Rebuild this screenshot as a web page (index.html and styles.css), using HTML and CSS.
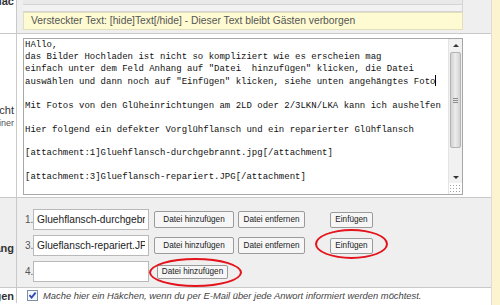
FILE: index.html
```html
<!DOCTYPE html>
<html>
  <head>
    <title>Beitrag schreiben</title>
    <link rel="stylesheet" href="styles.css">
  </head>
  <body>
    <div class="page">
      <div class="form">
        <div class="row row-tools">
          <div class="label label-top"><span class="label-title">Formatierung am Mac</span></div>
          <div class="cell">
            <div class="toolbar">
              <div class="tool-line"></div>
              <div class="tool-line tool-mid"></div>
              <div class="hint">Versteckter Text: [hide]Text[/hide] - Dieser Text bleibt Gästen verborgen</div>
            </div>
          </div>
        </div>

        <div class="row row-message">
          <div class="label">
            <div class="label-block">
              <div class="label-title">Nachricht</div>
              <div class="label-desc">Text deiner</div>
            </div>
          </div>
          <div class="cell">
            <div class="editor">
              <div class="editor-text">HAllo,
das Bilder Hochladen ist nicht so kompliziert wie es erscheien mag
einfach unter dem Feld Anhang auf "Datei  hinzufügen" klicken, die Datei
auswählen und dann noch auf "Einfügen" klicken, siehe unten angehängtes Foto<span class="caret"></span>

Mit Fotos von den Glüheinrichtungen am 2LD oder 2/3LKN/LKA kann ich aushelfen

Hier folgend ein defekter Vorglühflansch und ein reparierter Glühflansch

[attachment:1]Gluehflansch-durchgebrannt.jpg[/attachment]

[attachment:3]Glueflansch-repariert.JPG[/attachment]

Auf weitere Fragen freue ich mich</div>
              <div class="scrollbar">
                <div class="scroll-btn"><span class="arrow-up"></span></div>
                <div class="scroll-track">
                  <div class="scroll-thumb"><span class="grip"></span></div>
                </div>
                <div class="scroll-btn"><span class="arrow-down"></span></div>
                <div class="resize-grip"></div>
              </div>
            </div>
          </div>
        </div>

        <div class="row row-attach">
          <div class="label"><span class="label-title bold">Anhang</span></div>
          <div class="cell">
            <div class="attach-row">
              <span class="num">1.</span>
              <input class="file-name" type="text" value="Gluehflansch-durchgebrannt.jpg" readonly>
              <button class="btn btn-add">Datei hinzufügen</button>
              <button class="btn btn-remove">Datei entfernen</button>
              <button class="btn btn-insert">Einfügen</button>
            </div>
            <div class="attach-row">
              <span class="num">3.</span>
              <input class="file-name" type="text" value="Glueflansch-repariert.JPG" readonly>
              <button class="btn btn-add">Datei hinzufügen</button>
              <button class="btn btn-remove">Datei entfernen</button>
              <span class="circled circled-insert"><button class="btn btn-insert">Einfügen</button></span>
            </div>
            <div class="attach-row">
              <span class="num">4.</span>
              <input class="file-name" type="text" value="" readonly>
              <span class="circled circled-upload"><button class="btn btn-upload">Datei hinzufügen</button></span>
            </div>
          </div>
        </div>

        <div class="row row-notify">
          <div class="label"><span class="label-title bold">Benachrichtigen</span></div>
          <div class="cell">
            <label class="check">
              <span class="check-box">
                <svg width="9" height="9" viewBox="0 0 9 9"><polyline points="1.5,4.2 3.6,6.6 7.6,1.6" fill="none" stroke="#2b47b8" stroke-width="1.8"/></svg>
              </span>
              <span class="check-text">Mache hier ein Häkchen, wenn du per E-Mail über jede Anwort informiert werden möchtest.</span>
            </label>
          </div>
        </div>
      </div>
      <div class="strip"></div>
    </div>
  </body>
</html>
```

FILE: styles.css
```css
body {
  margin: 0;
  background-color: #ffffff;
  color: #333333;
  font-family: "Liberation Sans", Arial, sans-serif;
}

.page {
  display: flex;
  height: 305px;
  overflow: hidden;
}

.form {
  width: 491px;
  border-right: 1px solid #dcdcdc;
}

.strip {
  flex: 1;
  background-color: #fcf3cf;
}

.row {
  display: flex;
  border-bottom: 1px solid #c9c9c9;
}

.label {
  width: 14px;
  padding-right: 2px;
  border-right: 1px solid #c9c9c9;
  display: flex;
  justify-content: flex-end;
  align-items: center;
  overflow: hidden;
  white-space: nowrap;
  font-size: 11px;
}

.label-top {
  align-items: flex-start;
}

.label-top .label-title {
  margin-top: -5px;
  font-weight: bold;
}

.label-block {
  display: flex;
  flex-direction: column;
  align-items: flex-end;
  margin-top: 2px;
}

.label-title {
  line-height: 13px;
}

.label-desc {
  font-size: 9px;
  line-height: 13px;
  color: #555555;
}

.bold {
  font-weight: bold;
}

.cell {
  flex: 1;
  padding-left: 6px;
}

/* toolbar row */
.row-tools .cell {
  background-color: #efefef;
  padding-bottom: 3px;
}

.toolbar {
  width: 440px;
}

.tool-line {
  height: 4px;
  border-bottom: 1px solid #d4d4d4;
  border-right: 1px solid #d4d4d4;
  background-color: #e9e9e9;
}

.tool-mid {
  height: 6px;
  background-color: #f2f2f2;
}

.hint {
  height: 16px;
  line-height: 16px;
  padding-left: 7px;
  background-color: #fefbd2;
  border: 1px solid #e3dfbd;
  font-size: 10.3px;
  color: #555555;
  white-space: nowrap;
  overflow: hidden;
}

/* message row */
.row-message .cell {
  padding-top: 4px;
  padding-bottom: 2px;
}

.editor {
  display: flex;
  width: 438px;
  height: 155px;
  border: 1px solid #a7a7a7;
  background-color: #ffffff;
}

.editor-text {
  flex: 1;
  padding: 1px 0 0 1px;
  font-family: "Liberation Mono", "Courier New", monospace;
  font-size: 9px;
  line-height: 11.8px;
  color: #111111;
  white-space: pre;
  overflow: hidden;
}

.caret {
  display: inline-block;
  width: 0;
  height: 11px;
  border-left: 1px solid #000000;
  vertical-align: -2px;
}

.scrollbar {
  width: 13px;
  display: flex;
  flex-direction: column;
  background-color: #f1f1f1;
  border-left: 1px solid #e4e4e4;
}

.scroll-btn {
  height: 12px;
  display: flex;
  align-items: center;
  justify-content: center;
}

.arrow-up,
.arrow-down {
  width: 0;
  height: 0;
  border-left: 3px solid transparent;
  border-right: 3px solid transparent;
}

.arrow-up {
  border-bottom: 3px solid #333333;
}

.arrow-down {
  border-top: 3px solid #333333;
}

.scroll-track {
  flex: 1;
  padding: 1px 1px 0;
}

.scroll-thumb {
  height: 94px;
  border: 1px solid #b4b4b4;
  border-radius: 2px;
  background: linear-gradient(to right, #d2d2d2, #ececec 50%, #d2d2d2);
  display: flex;
  align-items: center;
  justify-content: center;
}

.grip {
  width: 5px;
  height: 5px;
  border-top: 1px solid #8c8c8c;
  border-bottom: 1px solid #8c8c8c;
  box-sizing: border-box;
  background: linear-gradient(#8c8c8c, #8c8c8c) center / 5px 1px no-repeat;
}

.resize-grip {
  height: 11px;
  background-color: #ffffff;
  background-image: radial-gradient(circle, #a0a0a0 0.8px, transparent 1px);
  background-size: 3px 3px;
  background-position: 3px 1px;
}

/* attachment row */
.row-attach .label,
.row-attach .cell {
  background-color: #efefef;
}

.row-attach .label {
  padding-top: 12px;
}

.row-attach .cell {
  padding-top: 11px;
  padding-bottom: 5px;
  display: flex;
  flex-direction: column;
  gap: 5px;
}

.attach-row {
  display: flex;
  align-items: center;
  height: 21px;
}

.num {
  width: 10px;
  padding-left: 2px;
  box-sizing: border-box;
  font-size: 10px;
  color: #555555;
}

.file-name {
  width: 116px;
  height: 21px;
  box-sizing: border-box;
  margin: 0;
  padding: 0 3px;
  border: 1px solid #b9b9b9;
  background-color: #ffffff;
  font-family: "Liberation Sans", Arial, sans-serif;
  font-size: 10.2px;
  color: #222222;
  outline: none;
}

.btn {
  height: 17px;
  margin: 0;
  padding: 0;
  border: 1px solid #9b9b9b;
  border-radius: 2px;
  background-color: #f6f6f6;
  font-family: "Liberation Sans", Arial, sans-serif;
  font-size: 8.2px;
  color: #1a1a1a;
}

.btn-add {
  width: 80px;
  margin-left: 5px;
}

.btn-remove {
  width: 67px;
  margin-left: 4px;
}

.btn-insert {
  width: 43px;
  height: 16px;
}

.attach-row > .btn-insert,
.circled-insert {
  margin-left: 25px;
}

.btn-upload {
  width: 71px;
  height: 14px;
}

.circled-upload {
  margin-left: 8px;
}

.circled {
  position: relative;
  display: flex;
}

.circled::after {
  content: "";
  position: absolute;
  border: 2.5px solid #e3141c;
  border-radius: 50%;
  pointer-events: none;
}

.circled-insert::after {
  left: -15px;
  right: -15px;
  top: -9px;
  bottom: -5px;
}

.circled-upload::after {
  left: -8px;
  right: -14px;
  top: -7px;
  bottom: -8px;
}

/* notify row */
.row-notify {
  border-bottom: none;
  flex: 1;
}

.row-notify .label {
  align-items: flex-start;
  padding-top: 2px;
}

.check {
  display: flex;
  align-items: center;
  gap: 5px;
  padding: 2px 0 0 4px;
}

.check-box {
  width: 9px;
  height: 9px;
  border: 1px solid #7b8fa8;
  background-color: #f4f6fa;
  display: flex;
}

.check-text {
  font-size: 9.4px;
  font-style: italic;
  color: #444444;
  white-space: nowrap;
}
```
